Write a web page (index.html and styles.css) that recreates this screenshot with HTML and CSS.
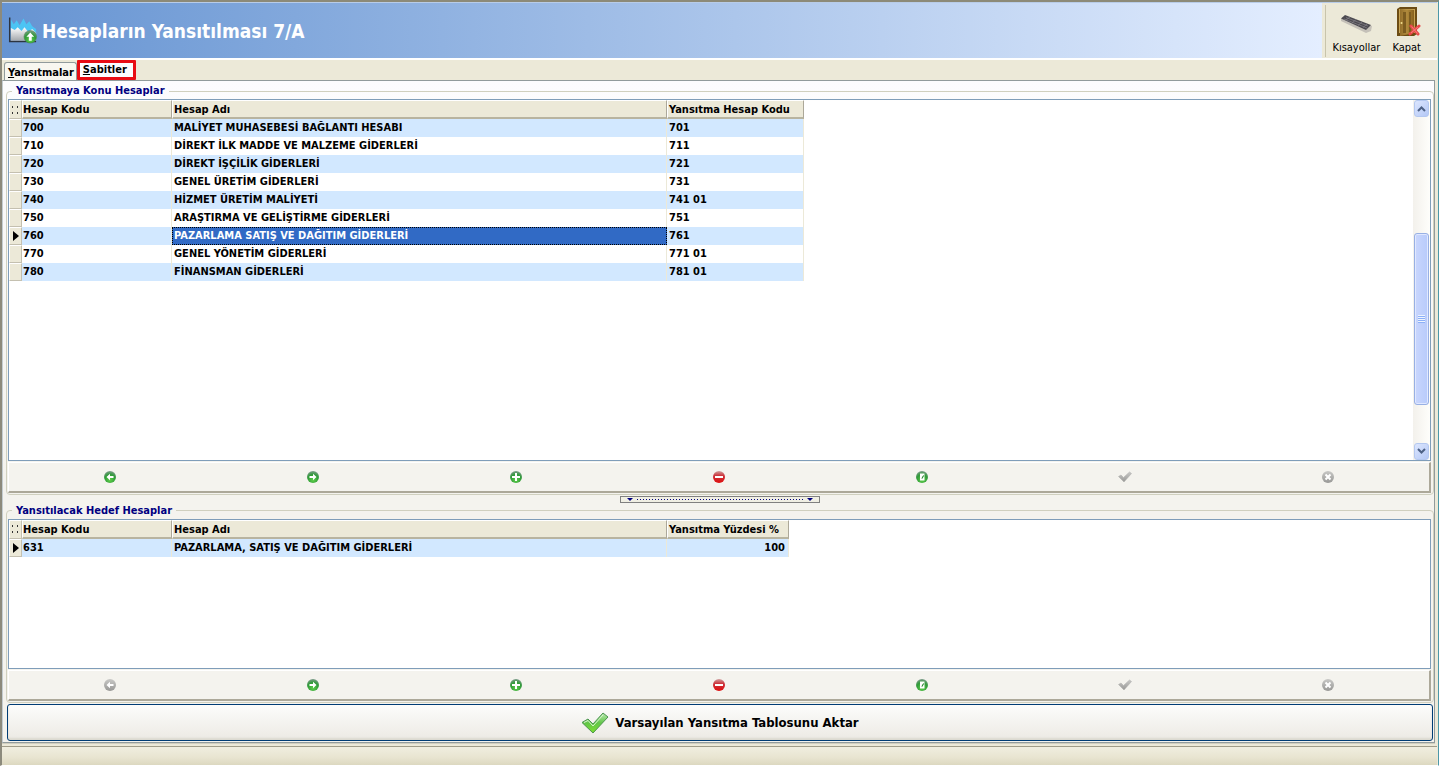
FILE: index.html
```html
<!DOCTYPE html>
<html lang="tr">

<head>
    <meta charset="UTF-8">
    <meta name="viewport" content="width=device-width, initial-scale=1.0">
    <title>Hesapların Yansıtılması 7/A</title>
    <link rel="stylesheet" href="styles.css">
</head>

<body>
    <!-- shared icons -->
    <svg class="defs" width="0" height="0" aria-hidden="true">
        <defs>
            <radialGradient id="green" cx="50%" cy="75%" r="75%">
                <stop offset="0" stop-color="#5fd04a" />
                <stop offset="0.6" stop-color="#2f9a38" />
                <stop offset="1" stop-color="#7f9c8c" />
            </radialGradient>
            <linearGradient id="red" x1="0" y1="0" x2="0" y2="1">
                <stop offset="0" stop-color="#d0a0a0" />
                <stop offset="0.4" stop-color="#cc3038" />
                <stop offset="1" stop-color="#e01010" />
            </linearGradient>
            <linearGradient id="gray" x1="0" y1="0" x2="0" y2="1">
                <stop offset="0" stop-color="#c8c8c6" />
                <stop offset="1" stop-color="#989896" />
            </linearGradient>
            <linearGradient id="check" x1="0" y1="0" x2="0" y2="1">
                <stop offset="0" stop-color="#b8e8b0" />
                <stop offset="0.5" stop-color="#62c648" />
                <stop offset="1" stop-color="#7ee030" />
            </linearGradient>
            <linearGradient id="area" x1="0" y1="0" x2="0" y2="1">
                <stop offset="0" stop-color="#ffffff" />
                <stop offset="1" stop-color="#a4a8ac" />
            </linearGradient>
            <linearGradient id="door" x1="0" y1="0" x2="1" y2="0">
                <stop offset="0" stop-color="#94702c" />
                <stop offset="0.5" stop-color="#b08a3c" />
                <stop offset="1" stop-color="#86601c" />
            </linearGradient>
            <symbol id="i-left" viewBox="0 0 12 12">
                <circle cx="6" cy="6" r="6" />
                <path d="M2.5 6L6 2.8V5h3.5v2H6v2.2z" fill="#fff" />
            </symbol>
            <symbol id="i-right" viewBox="0 0 12 12">
                <circle cx="6" cy="6" r="6" />
                <path d="M9.5 6L6 2.8V5H2.5v2H6v2.2z" fill="#fff" />
            </symbol>
            <symbol id="i-plus" viewBox="0 0 12 12">
                <circle cx="6" cy="6" r="6" />
                <path d="M5 2h2v3h3v2H7v3H5V7H2V5h3z" fill="#fff" />
            </symbol>
            <symbol id="i-minus" viewBox="0 0 12 12">
                <circle cx="6" cy="6" r="6" />
                <path d="M2 5h8v2H2z" fill="#fff" />
            </symbol>
            <symbol id="i-edit" viewBox="0 0 12 12">
                <circle cx="6" cy="6" r="6" />
                <path d="M4 2.5h4.500v7H4z" fill="#fff" />
                <path d="M5.500 8l.5-2L7.500 4l.5 1L6.500 7.500z" fill="#2c8a34" />
            </symbol>
            <symbol id="i-ok" viewBox="0 0 14 12">
                <path d="M0.500 5.500L3 4l2.500 2.500L11.500 1l2 1.500L6 11z" stroke="#aaaaa8" stroke-width="0.500" />
            </symbol>
            <symbol id="i-cancel" viewBox="0 0 12 12">
                <circle cx="6" cy="6" r="6" />
                <path d="M3.500 3.500l5 5M8.500 3.500l-5 5" stroke="#fff" stroke-width="2" />
            </symbol>
        </defs>
    </svg>

    <div class="window">
        <header class="header">
            <div class="banner">
                <svg class="logo" viewBox="0 0 32 28" aria-hidden="true">
                    <path d="M1 0h1.500v24H29v1.500H1z" fill="#2c3440" />
                    <path d="M3 2l3 5 3-4 3 5 4-7 3 6 3-3 3 5 4 3v11H3z" fill="#4cc4f4" />
                    <path d="M3 11l4 2 3-3 4 4 3-4 4 5 4-3 4 4v8H3z" fill="url(#area)" />
                    <circle cx="23" cy="20" r="6.500" fill="url(#green)" stroke="#3c8040" stroke-width="0.500" />
                    <path d="M23 15.500l4 4.500h-2.500v4h-3v-4H19z" fill="#fff" />
                </svg>
                <h1>Hesapların Yansıtılması 7/A</h1>
            </div>
            <div class="tools">
                <button class="tool" type="button">
                    <svg width="36" height="34" viewBox="0 0 36 34" aria-hidden="true">
                        <path d="M3 14l4-3 27 10-1 5-5 2L3 16z" fill="#c4c0b8" />
                        <path d="M3 13.500l4-3.500 26 10-5 5z" fill="#4c4a50" />
                        <path d="M6 14l23 9M8 12.500l22 8.500M12 12l-4 3M18 14.500L14 18M24 17l-4 3.500M29 19l-4 3.500" stroke="#85828a" stroke-width="0.700" fill="none" />
                    </svg>
                    <span>Kısayollar</span>
                </button>
                <button class="tool" type="button">
                    <svg width="28" height="34" viewBox="0 0 28 34" aria-hidden="true">
                        <path d="M4 4l3-2h17v27l-3 2H4z" fill="#6c4c14" />
                        <path d="M6 4h16v24H6z" fill="#c8a454" />
                        <path d="M7 4l14 1v23L7 31z" fill="url(#door)" />
                        <path d="M10 7h3v21h-3zM16 7h2v20h-2z" fill="#7c5c20" />
                        <circle cx="8.500" cy="18" r="1" fill="#f4e090" />
                        <path d="M18 21l7 8M26 21l-9 8" stroke="#e84848" stroke-width="3" stroke-linecap="round" />
                        <path d="M18.500 21.500l6 7M25 22l-7 6" stroke="#f88080" stroke-width="1" />
                    </svg>
                    <span>Kapat</span>
                </button>
            </div>
        </header>

        <nav class="tabs" role="tablist">
            <button class="tab" type="button" role="tab" aria-selected="false"><u>Y</u>ansıtmalar</button>
            <button class="tab active" type="button" role="tab" aria-selected="true"><u>S</u>abitler</button>
        </nav>

        <main class="page">
            <fieldset class="group group-top">
                <legend>Yansıtmaya Konu Hesaplar</legend>
                <div class="grid-box">
                    <div class="grid-area">
                        <table class="grid">
                            <thead>
                                <tr>
                                    <th class="mark"><i class="dots"></i></th>
                                    <th class="code">Hesap Kodu</th>
                                    <th class="name">Hesap Adı</th>
                                    <th class="target">Yansıtma Hesap Kodu</th>
                                </tr>
                            </thead>
                            <tbody>
                                <tr><td class="mark"></td><td>700</td><td>MALİYET MUHASEBESİ BAĞLANTI HESABI</td><td>701</td></tr>
                                <tr><td class="mark"></td><td>710</td><td>DİREKT İLK MADDE VE MALZEME GİDERLERİ</td><td>711</td></tr>
                                <tr><td class="mark"></td><td>720</td><td>DİREKT İŞÇİLİK GİDERLERİ</td><td>721</td></tr>
                                <tr><td class="mark"></td><td>730</td><td>GENEL ÜRETİM GİDERLERİ</td><td>731</td></tr>
                                <tr><td class="mark"></td><td>740</td><td>HİZMET ÜRETİM MALİYETİ</td><td>741 01</td></tr>
                                <tr><td class="mark"></td><td>750</td><td>ARAŞTIRMA VE GELİŞTİRME GİDERLERİ</td><td>751</td></tr>
                                <tr><td class="mark"><i class="current"></i></td><td>760</td><td class="selected">PAZARLAMA SATIŞ VE DAĞITIM GİDERLERİ</td><td>761</td></tr>
                                <tr><td class="mark"></td><td>770</td><td>GENEL YÖNETİM GİDERLERİ</td><td>771 01</td></tr>
                                <tr><td class="mark"></td><td>780</td><td>FİNANSMAN GİDERLERİ</td><td>781 01</td></tr>
                            </tbody>
                        </table>
                    </div>
                    <div class="scrollbar">
                        <button class="scroll-btn" type="button" aria-label="Yukarı">
                            <svg width="9" height="6" viewBox="0 0 9 6"><path d="M1 5l3.500-3.500L8 5" /></svg>
                        </button>
                        <div class="track">
                            <div class="thumb"><i class="grip"></i></div>
                        </div>
                        <button class="scroll-btn" type="button" aria-label="Aşağı">
                            <svg width="9" height="6" viewBox="0 0 9 6"><path d="M1 1l3.500 3.500L8 1" /></svg>
                        </button>
                    </div>
                </div>
                <div class="navigator">
                    <button type="button" aria-label="Önceki"><svg class="green"><use href="#i-left" /></svg></button>
                    <button type="button" aria-label="Sonraki"><svg class="green"><use href="#i-right" /></svg></button>
                    <button type="button" aria-label="Ekle"><svg class="green"><use href="#i-plus" /></svg></button>
                    <button type="button" aria-label="Sil"><svg class="red"><use href="#i-minus" /></svg></button>
                    <button type="button" aria-label="Düzenle"><svg class="green"><use href="#i-edit" /></svg></button>
                    <button type="button" aria-label="Kaydet" disabled><svg class="gray wide"><use href="#i-ok" /></svg></button>
                    <button type="button" aria-label="Vazgeç" disabled><svg class="gray"><use href="#i-cancel" /></svg></button>
                </div>
            </fieldset>

            <div class="splitter">
                <button class="handle" type="button" aria-label="Daralt">
                    <i class="down"></i><i class="dotline"></i><i class="down"></i>
                </button>
            </div>

            <fieldset class="group group-bottom">
                <legend>Yansıtılacak Hedef Hesaplar</legend>
                <div class="grid-box">
                    <div class="grid-area">
                        <table class="grid">
                            <thead>
                                <tr>
                                    <th class="mark"><i class="dots"></i></th>
                                    <th class="code">Hesap Kodu</th>
                                    <th class="name">Hesap Adı</th>
                                    <th class="percent">Yansıtma Yüzdesi %</th>
                                </tr>
                            </thead>
                            <tbody>
                                <tr><td class="mark"><i class="current"></i></td><td>631</td><td>PAZARLAMA, SATIŞ VE DAĞITIM GİDERLERİ</td><td class="number">100</td></tr>
                            </tbody>
                        </table>
                    </div>
                </div>
                <div class="navigator">
                    <button type="button" aria-label="Önceki" disabled><svg class="gray"><use href="#i-left" /></svg></button>
                    <button type="button" aria-label="Sonraki"><svg class="green"><use href="#i-right" /></svg></button>
                    <button type="button" aria-label="Ekle"><svg class="green"><use href="#i-plus" /></svg></button>
                    <button type="button" aria-label="Sil"><svg class="red"><use href="#i-minus" /></svg></button>
                    <button type="button" aria-label="Düzenle"><svg class="green"><use href="#i-edit" /></svg></button>
                    <button type="button" aria-label="Kaydet" disabled><svg class="gray wide"><use href="#i-ok" /></svg></button>
                    <button type="button" aria-label="Vazgeç" disabled><svg class="gray"><use href="#i-cancel" /></svg></button>
                </div>
            </fieldset>

            <button class="transfer" type="button">
                <svg width="28" height="22" viewBox="0 0 28 22" aria-hidden="true">
                    <path d="M1 10.500l6-3.500 5 5L22 1l5 4-15 16z" fill="url(#check)" stroke="#4c9450" stroke-width="1" />
                    <path d="M3 10.500l4-2 5 5.500L22 3" stroke="#d8f4d0" stroke-width="1" fill="none" />
                </svg>
                <span>Varsayılan Yansıtma Tablosunu Aktar</span>
            </button>
        </main>

        <footer class="status"></footer>
    </div>
</body>

</html>
```
FILE: styles.css
```css
* {
    box-sizing: border-box;
}

body {
    margin: 0;
    font-family: Tahoma, "DejaVu Sans Condensed", "DejaVu Sans", sans-serif;
    font-size: 11px;
    font-weight: bold;
    line-height: 14px;
    color: #000;
    background: #fff;
}

button {
    margin: 0;
    padding: 0;
    border: 0;
    background: none;
    font: inherit;
    color: inherit;
}

.defs {
    position: absolute;
}

.window {
    display: flex;
    flex-direction: column;
    height: 100vh;
    padding-right: 1px;
    border-top: 2px solid #8c8a78;
    border-left: 2px solid #8c8a7c;
    border-right: 1px solid #4c98a8;
    border-bottom: 1px solid #fff;
    background: #ece9d8;
}

/* header */
.header {
    display: flex;
    height: 58px;
    border-top: 1px solid #b8cce8;
    border-bottom: 2px solid #fff;
}

.banner {
    flex: 1;
    display: flex;
    align-items: center;
    gap: 3px;
    padding-left: 6px;
    background: linear-gradient(to right, #6694d2, #e4eeff);
}

.logo {
    width: 31px;
    height: 28px;
}

.banner h1 {
    margin: 0;
    font-size: 19px;
    line-height: 24px;
    color: #fff;
}

.tools {
    display: flex;
    gap: 12px;
    margin: 2px 0 1px 3px;
    padding: 0 16px 0 6px;
    border-left: 1px solid #c8c4ac;
}

.tool {
    display: flex;
    flex-direction: column;
    align-items: center;
    gap: 2px;
    font-weight: normal;
}

/* tabs */
.tabs {
    display: flex;
    align-items: flex-end;
    height: 20px;
    padding-left: 2px;
}

.tab {
    height: 18px;
    padding: 2px 2px 0 3px;
    border: 1px solid #919b9c;
    border-bottom: 0;
    border-radius: 3px 3px 0 0;
    background: #f8f7f0;
}

.tab.active {
    height: 20px;
    padding: 0 6px 0 3px;
    border: 3px solid #e80c14;
    border-radius: 1px;
    background: #fcfcfe;
}

/* page */
.page {
    flex: 1;
    display: flex;
    flex-direction: column;
    min-height: 0;
    margin-right: 2px;
    padding: 3px 0 1px 3px;
    border: 1px solid #919b9c;
    border-left-color: #c4ccd0;
    box-shadow: 0 1px 0 #d0cebf;
    background: linear-gradient(#fcfcfe, #f4f3ee 60%);
}

.group {
    display: flex;
    flex-direction: column;
    min-width: 0;
    min-height: 0;
    margin: 0;
    padding: 1px 2px 1px 1px;
    border: 1px solid #d0d0bf;
    border-radius: 4px;
}

.group-top {
    flex: 411 1 0;
}

.group-bottom {
    flex: 197 1 0;
}

.group legend {
    margin-left: 4px;
    padding: 0 4px;
    color: #000080;
}

.grid-box {
    flex: 1;
    display: flex;
    min-height: 0;
    border: 1px solid #7f9db9;
    background: #fff;
}

.grid-area {
    flex: 1;
}

.grid {
    border-collapse: separate;
    border-spacing: 0;
    table-layout: fixed;
    width: 0;
}

.grid th,
.grid td {
    height: 18px;
    padding: 0 2px;
    text-align: left;
    white-space: nowrap;
    line-height: 16px;
}

.grid th {
    padding: 2px 1px 0;
    border: 1px solid #fff;
    border-right-color: #aca899;
    border-bottom: 2px solid #b8b4a0;
    line-height: 14px;
    background: #ece9d8;
}

.grid td {
    border-right: 1px solid #ece9d8;
}

.grid td:nth-child(2),
.grid th.code {
    padding-left: 1px;
}

.grid th.code {
    padding-left: 0;
}

.grid tbody tr:nth-child(odd) {
    background: #d2e8ff;
}

.grid .mark {
    width: 13px;
    padding: 0 3px;
    border: 1px solid #fff;
    border-right-color: #c4c0b0;
    border-bottom-color: #c4c0b0;
    background: #ece9d8;
}

.grid th.mark {
    padding: 0 2px;
}

.grid .code {
    width: 150px;
}

.grid .name {
    width: 495px;
}

.grid .target {
    width: 137px;
}

.grid .percent {
    width: 122px;
}

.grid .number {
    padding-right: 3px;
    text-align: right;
}

.grid .selected {
    padding: 0 1px;
    border: 1px dotted #000;
    background: #316ac5;
    color: #fff;
}

.current {
    display: block;
    width: 0;
    border: 5px solid transparent;
    border-left: 6px solid #000;
    border-right: 0;
}

/* four little marks in the header corner */
.dots {
    display: flex;
    flex-direction: column;
    justify-content: space-between;
    width: 6px;
    height: 8px;
}

.dots::before,
.dots::after {
    content: "";
    height: 2px;
    border-left: 1px solid #333;
    border-right: 1px solid #333;
}

/* scrollbar */
.scrollbar {
    display: flex;
    flex-direction: column;
    width: 17px;
    background: linear-gradient(to right, #f3f1ec, #fefefb);
}

.scroll-btn {
    display: flex;
    align-items: center;
    justify-content: center;
    height: 17px;
    margin: 0 1px;
    border: 1px solid #b4c8f0;
    border-radius: 3px;
    background: linear-gradient(135deg, #dce6fe, #b4c8f6);
}

.scroll-btn path {
    fill: none;
    stroke: #4d6185;
    stroke-width: 2;
}

.track {
    flex: 1;
    display: flex;
    flex-direction: column;
}

.track::before {
    content: "";
    flex: 116;
}

.track::after {
    content: "";
    flex: 38;
}

.thumb {
    flex: 170;
    display: flex;
    align-items: center;
    justify-content: center;
    margin: 0 1px;
    border: 1px solid #98b0e4;
    border-radius: 3px;
    box-shadow: inset 0 0 0 1px #e0e8ff;
    background: linear-gradient(to right, #c9d6fd, #b8cbfb);
}

.grip {
    width: 7px;
    height: 8px;
    background: repeating-linear-gradient(#eef4fe 0 1px, #8cb0f8 1px 2px);
}

/* record navigator */
.navigator {
    display: flex;
    height: 31px;
    margin-top: 1px;
    border: 1px solid #fff;
    border-right: 2px solid #aca899;
    border-bottom: 2px solid #aca899;
    background: #f4f3ee;
}

.navigator button {
    flex: 1;
    display: flex;
    align-items: center;
    justify-content: center;
}

.navigator svg {
    width: 12px;
    height: 12px;
}

.navigator .wide {
    width: 14px;
}

.green {
    fill: url(#green);
}

.red {
    fill: url(#red);
}

.gray {
    fill: url(#gray);
}

.splitter {
    display: flex;
    justify-content: center;
    height: 9px;
    padding-top: 1px;
}

.handle {
    display: flex;
    align-items: center;
    justify-content: space-between;
    width: 200px;
    height: 7px;
    padding: 0 6px;
    border: 1px solid #808080;
    background: #f0efe4;
}

.down {
    border: 3px solid transparent;
    border-top-color: #000080;
    border-bottom: 0;
}

.dotline {
    flex: 1;
    height: 1px;
    margin: 0 4px;
    background: repeating-linear-gradient(to right, #000080 0 1px, transparent 1px 3px);
}

.transfer {
    display: flex;
    align-items: center;
    justify-content: center;
    gap: 6px;
    height: 37px;
    margin: 1px 1px 0;
    border: 1px solid #003c74;
    border-radius: 3px;
    box-shadow: inset 0 -2px 2px #dcdad0;
    font-size: 13px;
    background: linear-gradient(#fcfcfb, #eceae4);
}

.status {
    height: 19px;
    margin-top: 3px;
    border-top: 1px solid #a09c88;
    background: linear-gradient(#f0eee0, #e8e4d0 60%, #dcd8c0);
}
```
